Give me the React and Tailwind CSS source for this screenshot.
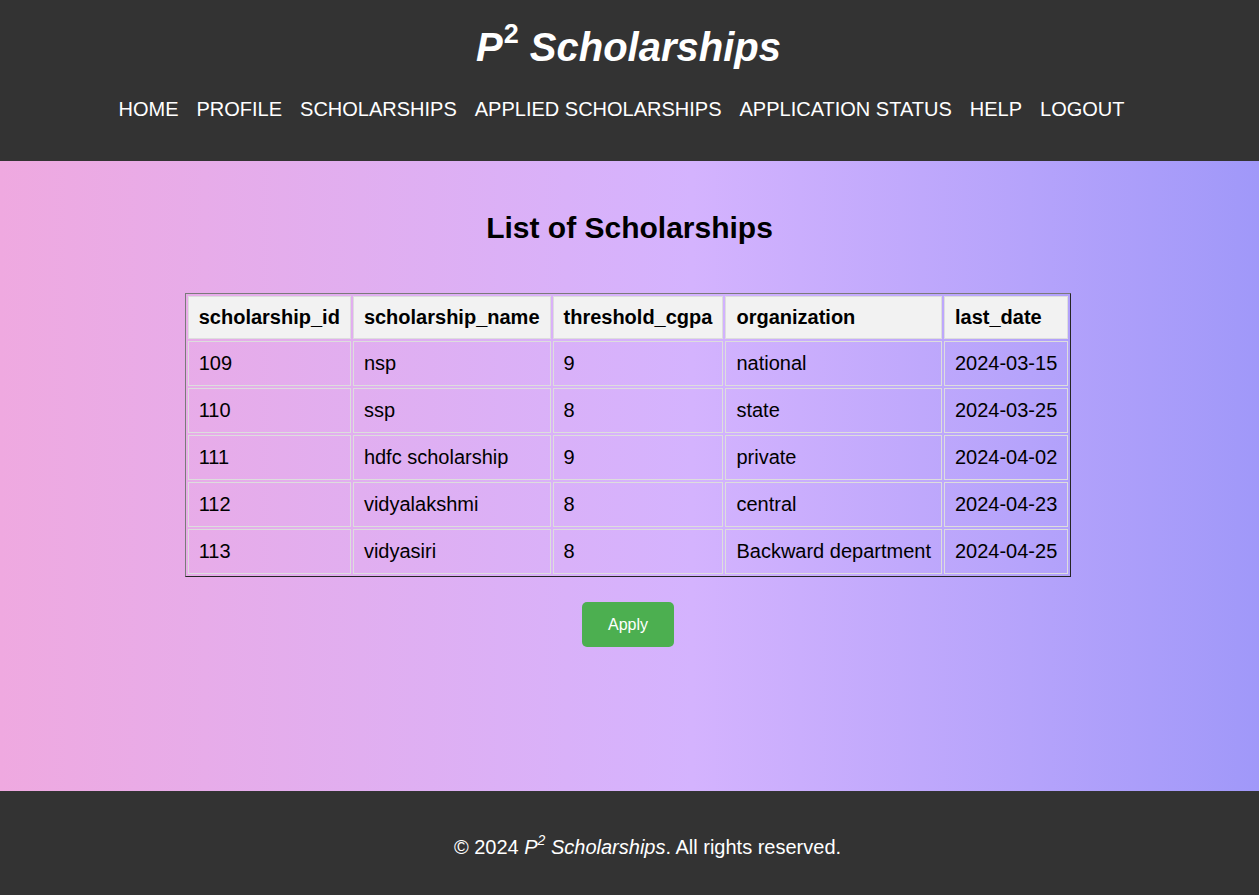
const navItems = [
  "HOME",
  "PROFILE",
  "SCHOLARSHIPS",
  "APPLIED SCHOLARSHIPS",
  "APPLICATION STATUS",
  "HELP",
  "LOGOUT",
];

const columns = ["scholarship_id", "scholarship_name", "threshold_cgpa", "organization", "last_date"];

const rows = [
  ["109", "nsp", "9", "national", "2024-03-15"],
  ["110", "ssp", "8", "state", "2024-03-25"],
  ["111", "hdfc scholarship", "9", "private", "2024-04-02"],
  ["112", "vidyalakshmi", "8", "central", "2024-04-23"],
  ["113", "vidyasiri", "8", "Backward department", "2024-04-25"],
];

export default function App() {
  return (
    <div className="min-h-screen font-['Liberation_Sans',Arial,sans-serif] text-black">
      <header className="h-[161px] bg-[#333333] text-white pt-[24px]">
        <h1 className="text-center text-[40px] leading-[46px] font-bold italic pr-[2px]">
          P<sup className="text-[27px] leading-none relative -top-[18px] not-italic ml-[1px]">2</sup> Scholarships
        </h1>
        <nav className="mt-[28px] flex justify-center gap-[18px] pr-[16px] text-[20px] leading-[23px]">
          {navItems.map((item) => (
            <a key={item} href="#" className="text-white">
              {item}
            </a>
          ))}
        </nav>
      </header>

      <main className="h-[630px] bg-[linear-gradient(to_right,#efa9e0,#d9b1f9_45%,#d4b3fe_55%,#a098f9)] pt-[50px] flex flex-col items-center">
        <h2 className="text-[30px] leading-[34px] font-bold">List of Scholarships</h2>

        <table className="mt-[48px] mr-[3px] border border-[#7a7a7a] [border-style:outset] border-separate border-spacing-[2px] text-[20px] leading-[23px]">
          <thead>
            <tr>
              {columns.map((c) => (
                <th
                  key={c}
                  className="bg-[#f2f2f2] border border-[#dddddd] px-[10px] py-[9px] text-left font-bold"
                >
                  {c}
                </th>
              ))}
            </tr>
          </thead>
          <tbody>
            {rows.map((r) => (
              <tr key={r[0]}>
                {r.map((cell, i) => (
                  <td key={i} className="border border-[#dddddd] px-[10px] py-[10px] text-left">
                    {cell}
                  </td>
                ))}
              </tr>
            ))}
          </tbody>
        </table>

        <button className="mt-[25px] mr-[3px] w-[92px] h-[45px] rounded-[5px] bg-[#4caf50] text-white text-[16px]">
          Apply
        </button>
      </main>

      <footer className="h-[104px] bg-[#333333] text-white text-center text-[20px] leading-[23px] pt-[45px] pl-[36px]">
        © 2024 <i>P<sup className="text-[14px] leading-none relative -top-[9px]">2</sup> Scholarships</i>. All rights reserved.
      </footer>
    </div>
  );
}
